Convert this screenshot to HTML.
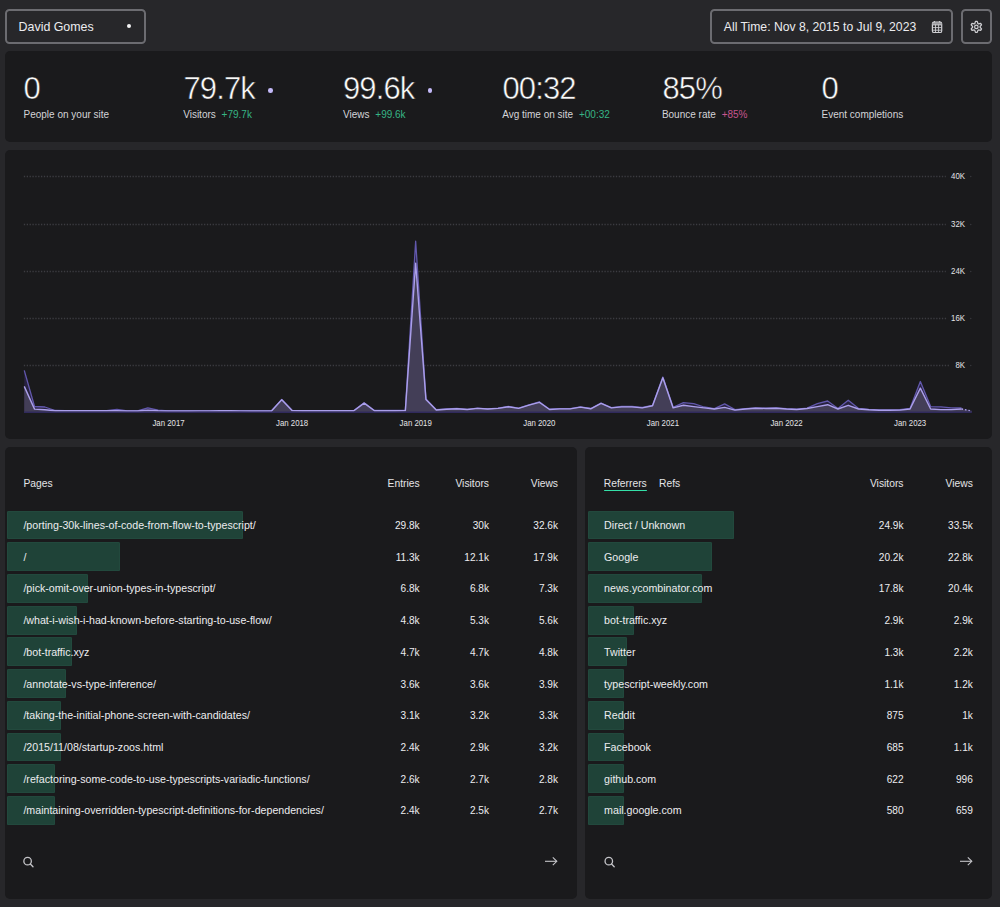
<!DOCTYPE html>
<html>
<head>
<meta charset="utf-8">
<style>
html, body { margin:0; padding:0; }
body { width:1000px; height:907px; background:#27272a; position:relative; overflow:hidden;
  font-family:"Liberation Sans", sans-serif; color:#e4e4e7; }
.abs { position:absolute; }
.btn { position:absolute; box-sizing:border-box; border:2px solid #6c6c71; border-radius:4.5px; background:#27272a; }
.panel { position:absolute; background:#1a1a1c; border-radius:5px; }
.big { position:absolute; font-size:31px; line-height:1; color:#fafafa; white-space:nowrap; letter-spacing:-0.9px; -webkit-text-stroke:0.5px #1a1a1c; }
.lbl { position:absolute; font-size:10px; line-height:1; color:#d4d4d8; white-space:nowrap; }
.dg { color:#36b585; margin-left:5.8px; }
.dp { color:#c7558f; margin-left:5.8px; }
.sdot { position:absolute; width:4.6px; height:4.6px; border-radius:50%; background:#c3b9f8; }
.yl, .xl { font-family:"Liberation Sans", sans-serif; font-size:8.7px; fill:#e4e4e7; }
.bar { position:absolute; height:29px; background:#1f4338; border-radius:1.5px; box-shadow: inset 0 0 0 1px #22493d; }
.rt { position:absolute; height:29px; line-height:29px; font-size:10.65px; color:#ececef; white-space:nowrap; }
.rn { position:absolute; height:29px; line-height:29px; font-size:10.1px; color:#ececef; white-space:nowrap; text-align:right; }
.th { position:absolute; font-size:10.3px; line-height:1; color:#e4e4e7; white-space:nowrap; }
</style>
</head>
<body>
<!-- top bar -->
<div class="btn" style="left:5px;top:9.2px;width:140.5px;height:34.4px;"></div>
<div class="abs" style="left:18.6px;top:19px;font-size:12.4px;line-height:16px;color:#ececef;">David Gomes</div>
<div class="abs" style="left:126.65px;top:23.85px;width:4.5px;height:4.5px;border-radius:50%;background:#f4f4f5;"></div>

<div class="btn" style="left:710px;top:9.2px;width:243.2px;height:34.4px;"></div>
<div class="abs" style="left:723.8px;top:19px;font-size:12.2px;line-height:16px;color:#ececef;">All Time: Nov 8, 2015 to Jul 9, 2023</div>
<div class="btn" style="left:961px;top:9.2px;width:31.2px;height:34.4px;"></div>
<svg class="abs" style="left:920px;top:10px" width="80" height="30" viewBox="920 10 80 30">
  <g stroke="#cfcfd3" fill="none">
    <rect x="932.4" y="22.2" width="9.3" height="10.3" rx="1.6" stroke-width="1.2"/>
    <rect x="932.4" y="23.0" width="9.3" height="1.9" fill="#9a9a9e" stroke="none"/>
    <line x1="935.5" y1="24.5" x2="935.5" y2="32.4" stroke-width="0.9"/>
    <line x1="938.6" y1="24.5" x2="938.6" y2="32.4" stroke-width="0.9"/>
    <line x1="932.4" y1="24.9" x2="941.7" y2="24.9" stroke-width="0.9"/>
    <line x1="932.4" y1="27.6" x2="941.7" y2="27.6" stroke-width="0.9"/>
    <line x1="932.4" y1="30.2" x2="941.7" y2="30.2" stroke-width="0.9"/>
    <line x1="934.4" y1="20.9" x2="934.4" y2="22.6" stroke-width="1.1"/>
    <line x1="939.6" y1="20.9" x2="939.6" y2="22.6" stroke-width="1.1"/>
    <path d="M975.48,21.42 L977.22,21.42 L977.88,23.47 L978.55,23.87 L980.66,23.41 L981.53,24.91 L980.08,26.51 L980.08,27.29 L981.53,28.89 L980.66,30.39 L978.55,29.93 L977.88,30.33 L977.22,32.38 L975.48,32.38 L974.82,30.33 L974.15,29.93 L972.04,30.39 L971.17,28.89 L972.62,27.29 L972.62,26.51 L971.17,24.91 L972.04,23.41 L974.15,23.87 L974.82,23.47 Z" stroke-width="1.25" stroke-linejoin="round"/>
    <circle cx="976.35" cy="26.9" r="1.75" stroke-width="1.2"/>
  </g>
</svg>

<!-- stats panel -->
<div class="panel" style="left:5px;top:51.3px;width:987px;height:90.3px;"></div>
<div class="big" style="left:23.5px;top:72.6px;">0</div>
<div class="lbl" style="left:23.5px;top:110.1px;">People on your site</div>

<div class="big" style="left:183.5px;top:72.6px;">79.7k</div>
<div class="sdot" style="left:268.3px;top:87.95px;"></div>
<div class="lbl" style="left:183.2px;top:110.1px;">Visitors<span class="dg">+79.7k</span></div>

<div class="big" style="left:343px;top:72.6px;">99.6k</div>
<div class="sdot" style="left:427.9px;top:87.95px;"></div>
<div class="lbl" style="left:343px;top:110.1px;">Views<span class="dg">+99.6k</span></div>

<div class="big" style="left:502.5px;top:72.6px;">00:32</div>
<div class="lbl" style="left:502.2px;top:110.1px;">Avg time on site<span class="dg">+00:32</span></div>

<div class="big" style="left:662.5px;top:72.6px;">85%</div>
<div class="lbl" style="left:661.9px;top:110.1px;">Bounce rate<span class="dp">+85%</span></div>

<div class="big" style="left:821.5px;top:72.6px;">0</div>
<div class="lbl" style="left:821.5px;top:110.1px;">Event completions</div>

<!-- chart panel -->
<div class="panel" style="left:5px;top:150px;width:987px;height:289.2px;"></div>
<svg class="abs" style="left:0;top:0" width="1000" height="907" viewBox="0 0 1000 907">
<line x1="23.85" y1="176.5" x2="945.8" y2="176.5" stroke="#3c3c41" stroke-width="1.3" stroke-dasharray="1.3 1.56"/>
<text transform="translate(965,179.1) scale(0.9,1)" text-anchor="end" class="yl">40K</text>
<circle cx="970.8" cy="176.5" r="0.65" fill="#3c3c41"/>
<line x1="23.85" y1="224.5" x2="945.8" y2="224.5" stroke="#3c3c41" stroke-width="1.3" stroke-dasharray="1.3 1.56"/>
<text transform="translate(965,227.1) scale(0.9,1)" text-anchor="end" class="yl">32K</text>
<circle cx="970.8" cy="224.5" r="0.65" fill="#3c3c41"/>
<line x1="23.85" y1="271.5" x2="945.8" y2="271.5" stroke="#3c3c41" stroke-width="1.3" stroke-dasharray="1.3 1.56"/>
<text transform="translate(965,274.1) scale(0.9,1)" text-anchor="end" class="yl">24K</text>
<circle cx="970.8" cy="271.5" r="0.65" fill="#3c3c41"/>
<line x1="23.85" y1="318.5" x2="946.3" y2="318.5" stroke="#3c3c41" stroke-width="1.3" stroke-dasharray="1.3 1.56"/>
<text transform="translate(965,321.1) scale(0.9,1)" text-anchor="end" class="yl">16K</text>
<circle cx="970.8" cy="318.5" r="0.65" fill="#3c3c41"/>
<line x1="23.85" y1="365.5" x2="950.2" y2="365.5" stroke="#3c3c41" stroke-width="1.3" stroke-dasharray="1.3 1.56"/>
<text transform="translate(965,368.1) scale(0.9,1)" text-anchor="end" class="yl">8K</text>
<circle cx="970.8" cy="365.5" r="0.65" fill="#3c3c41"/>
<path d="M24.25,412.0 L24.25,370.40 34.55,406.50 44.85,407.00 55.15,410.50 65.45,410.60 75.75,410.60 86.05,410.60 96.35,410.60 106.65,410.60 116.95,409.40 127.25,410.80 137.55,410.80 147.85,407.80 158.15,410.20 168.45,410.90 178.75,410.90 189.05,410.90 199.35,410.80 209.65,410.80 219.95,410.70 230.25,410.70 240.55,410.80 250.85,410.90 261.15,410.90 271.45,410.90 281.75,399.40 292.05,410.30 302.35,410.60 312.65,410.60 322.95,410.60 333.25,410.60 343.55,410.60 353.85,410.60 364.15,402.80 374.45,410.50 384.75,410.50 395.05,410.50 405.35,410.40 415.65,241.20 425.95,399.00 436.25,409.70 446.55,409.00 456.85,408.50 467.15,409.30 477.45,408.20 487.75,408.80 498.05,408.20 508.35,406.50 518.65,408.10 528.95,404.80 539.25,401.80 549.55,409.20 559.85,408.60 570.15,408.60 580.45,406.80 590.75,408.50 601.05,403.00 611.35,407.60 621.65,406.50 631.95,406.50 642.25,407.50 652.55,405.30 662.85,377.00 673.15,407.30 683.45,402.60 693.75,403.70 704.05,407.00 714.35,408.60 724.65,403.90 734.95,409.60 745.25,408.60 755.55,407.80 765.85,408.10 776.15,407.80 786.45,408.60 796.75,409.10 807.05,408.10 817.35,403.70 827.65,401.00 837.95,408.50 848.25,400.20 858.55,408.50 868.85,409.40 879.15,409.90 889.45,409.90 899.75,409.70 910.05,408.50 920.35,381.50 930.65,406.60 940.95,406.80 951.25,407.90 961.55,407.90 971.85,410.50 L971.85,412.0 Z" fill="#28223f" />
<path d="M24.25,412.0 L24.25,386.40 34.55,409.10 44.85,409.70 55.15,410.70 65.45,410.80 75.75,410.80 86.05,410.80 96.35,410.80 106.65,410.80 116.95,410.70 127.25,411.00 137.55,411.00 147.85,410.20 158.15,410.80 168.45,411.00 178.75,411.00 189.05,411.00 199.35,410.90 209.65,410.90 219.95,410.80 230.25,410.80 240.55,410.90 250.85,411.00 261.15,411.00 271.45,411.00 281.75,399.80 292.05,410.50 302.35,410.80 312.65,410.80 322.95,410.80 333.25,410.80 343.55,410.80 353.85,410.80 364.15,403.10 374.45,410.70 384.75,410.70 395.05,410.70 405.35,410.60 415.65,263.20 425.95,399.60 436.25,410.00 446.55,409.20 456.85,408.70 467.15,409.50 477.45,408.40 487.75,409.00 498.05,408.40 508.35,406.80 518.65,408.40 528.95,405.20 539.25,402.30 549.55,409.50 559.85,408.90 570.15,408.90 580.45,407.10 590.75,408.80 601.05,403.40 611.35,407.90 621.65,406.90 631.95,406.90 642.25,407.90 652.55,405.80 662.85,377.80 673.15,407.90 683.45,405.30 693.75,406.60 704.05,407.90 714.35,409.00 724.65,407.40 734.95,410.10 745.25,409.00 755.55,408.20 765.85,408.50 776.15,408.20 786.45,409.00 796.75,409.50 807.05,408.50 817.35,406.60 827.65,404.70 837.95,409.00 848.25,405.30 858.55,409.00 868.85,409.80 879.15,410.30 889.45,410.30 899.75,410.10 910.05,409.00 920.35,388.10 930.65,409.00 940.95,409.60 951.25,409.60 961.55,409.00 971.85,411.00 L971.85,412.0 Z" fill="#433e57" />
<polyline points="24.25,370.40 34.55,406.50 44.85,407.00 55.15,410.50 65.45,410.60 75.75,410.60 86.05,410.60 96.35,410.60 106.65,410.60 116.95,409.40 127.25,410.80 137.55,410.80 147.85,407.80 158.15,410.20 168.45,410.90 178.75,410.90 189.05,410.90 199.35,410.80 209.65,410.80 219.95,410.70 230.25,410.70 240.55,410.80 250.85,410.90 261.15,410.90 271.45,410.90 281.75,399.40 292.05,410.30 302.35,410.60 312.65,410.60 322.95,410.60 333.25,410.60 343.55,410.60 353.85,410.60 364.15,402.80 374.45,410.50 384.75,410.50 395.05,410.50 405.35,410.40 415.65,241.20 425.95,399.00 436.25,409.70 446.55,409.00 456.85,408.50 467.15,409.30 477.45,408.20 487.75,408.80 498.05,408.20 508.35,406.50 518.65,408.10 528.95,404.80 539.25,401.80 549.55,409.20 559.85,408.60 570.15,408.60 580.45,406.80 590.75,408.50 601.05,403.00 611.35,407.60 621.65,406.50 631.95,406.50 642.25,407.50 652.55,405.30 662.85,377.00 673.15,407.30 683.45,402.60 693.75,403.70 704.05,407.00 714.35,408.60 724.65,403.90 734.95,409.60 745.25,408.60 755.55,407.80 765.85,408.10 776.15,407.80 786.45,408.60 796.75,409.10 807.05,408.10 817.35,403.70 827.65,401.00 837.95,408.50 848.25,400.20 858.55,408.50 868.85,409.40 879.15,409.90 889.45,409.90 899.75,409.70 910.05,408.50 920.35,381.50 930.65,406.60 940.95,406.80 951.25,407.90 961.55,407.90" fill="none" stroke="#6258ad" stroke-width="1.3" stroke-linejoin="round"/>
<polyline points="24.25,386.40 34.55,409.10 44.85,409.70 55.15,410.70 65.45,410.80 75.75,410.80 86.05,410.80 96.35,410.80 106.65,410.80 116.95,410.70 127.25,411.00 137.55,411.00 147.85,410.20 158.15,410.80 168.45,411.00 178.75,411.00 189.05,411.00 199.35,410.90 209.65,410.90 219.95,410.80 230.25,410.80 240.55,410.90 250.85,411.00 261.15,411.00 271.45,411.00 281.75,399.80 292.05,410.50 302.35,410.80 312.65,410.80 322.95,410.80 333.25,410.80 343.55,410.80 353.85,410.80 364.15,403.10 374.45,410.70 384.75,410.70 395.05,410.70 405.35,410.60 415.65,263.20 425.95,399.60 436.25,410.00 446.55,409.20 456.85,408.70 467.15,409.50 477.45,408.40 487.75,409.00 498.05,408.40 508.35,406.80 518.65,408.40 528.95,405.20 539.25,402.30 549.55,409.50 559.85,408.90 570.15,408.90 580.45,407.10 590.75,408.80 601.05,403.40 611.35,407.90 621.65,406.90 631.95,406.90 642.25,407.90 652.55,405.80 662.85,377.80 673.15,407.90 683.45,405.30 693.75,406.60 704.05,407.90 714.35,409.00 724.65,407.40 734.95,410.10 745.25,409.00 755.55,408.20 765.85,408.50 776.15,408.20 786.45,409.00 796.75,409.50 807.05,408.50 817.35,406.60 827.65,404.70 837.95,409.00 848.25,405.30 858.55,409.00 868.85,409.80 879.15,410.30 889.45,410.30 899.75,410.10 910.05,409.00 920.35,388.10 930.65,409.00 940.95,409.60 951.25,409.60 961.55,409.00" fill="none" stroke="#ab9fea" stroke-width="1.4" stroke-linejoin="round"/>
<line x1="961.55" y1="409.0" x2="971.85" y2="411.0" stroke="#ab9fea" stroke-width="1.4" stroke-dasharray="1.5 2"/>
<line x1="24" y1="412.3" x2="971.85" y2="412.3" stroke="#302a5c" stroke-width="1.4"/>
<text transform="translate(168.50,425.9) scale(0.9,1)" text-anchor="middle" class="xl">Jan 2017</text>
<text transform="translate(292.10,425.9) scale(0.9,1)" text-anchor="middle" class="xl">Jan 2018</text>
<text transform="translate(415.70,425.9) scale(0.9,1)" text-anchor="middle" class="xl">Jan 2019</text>
<text transform="translate(539.30,425.9) scale(0.9,1)" text-anchor="middle" class="xl">Jan 2020</text>
<text transform="translate(662.90,425.9) scale(0.9,1)" text-anchor="middle" class="xl">Jan 2021</text>
<text transform="translate(786.50,425.9) scale(0.9,1)" text-anchor="middle" class="xl">Jan 2022</text>
<text transform="translate(910.10,425.9) scale(0.9,1)" text-anchor="middle" class="xl">Jan 2023</text>
</svg>

<!-- bottom panels -->
<div class="panel" style="left:5.2px;top:447px;width:572px;height:452.3px;"></div>
<div class="panel" style="left:584.5px;top:447px;width:407.5px;height:452.3px;"></div>

<div class="th" style="left:23.4px;top:479.2px;">Pages</div>
<div class="th" style="right:580.4px;top:479.2px;">Entries</div>
<div class="th" style="right:511px;top:479.2px;">Visitors</div>
<div class="th" style="right:442px;top:479.2px;">Views</div>

<div class="th" style="left:603.8px;top:479.2px;">Referrers</div>
<div class="abs" style="left:603.8px;top:489.6px;width:42.8px;height:1.8px;background:#34e0a8;border-radius:1px;"></div>
<div class="th" style="left:659px;top:479.2px;">Refs</div>
<div class="th" style="right:96.5px;top:479.2px;">Visitors</div>
<div class="th" style="right:27.2px;top:479.2px;">Views</div>

<div class="bar" style="left:7.2px;top:510.50px;width:235.80px;height:28.9px"></div>
<div class="rt" style="left:23.4px;top:510.95px">/porting-30k-lines-of-code-from-flow-to-typescript/</div>
<div class="rn" style="right:580.4px;top:510.95px">29.8k</div>
<div class="rn" style="right:511.0px;top:510.95px">30k</div>
<div class="rn" style="right:442.0px;top:510.95px">32.6k</div>
<div class="bar" style="left:7.2px;top:542.22px;width:112.60px;height:28.9px"></div>
<div class="rt" style="left:23.4px;top:542.67px">/</div>
<div class="rn" style="right:580.4px;top:542.67px">11.3k</div>
<div class="rn" style="right:511.0px;top:542.67px">12.1k</div>
<div class="rn" style="right:442.0px;top:542.67px">17.9k</div>
<div class="bar" style="left:7.2px;top:573.94px;width:80.60px;height:28.9px"></div>
<div class="rt" style="left:23.4px;top:574.39px">/pick-omit-over-union-types-in-typescript/</div>
<div class="rn" style="right:580.4px;top:574.39px">6.8k</div>
<div class="rn" style="right:511.0px;top:574.39px">6.8k</div>
<div class="rn" style="right:442.0px;top:574.39px">7.3k</div>
<div class="bar" style="left:7.2px;top:605.66px;width:69.60px;height:28.9px"></div>
<div class="rt" style="left:23.4px;top:606.11px">/what-i-wish-i-had-known-before-starting-to-use-flow/</div>
<div class="rn" style="right:580.4px;top:606.11px">4.8k</div>
<div class="rn" style="right:511.0px;top:606.11px">5.3k</div>
<div class="rn" style="right:442.0px;top:606.11px">5.6k</div>
<div class="bar" style="left:7.2px;top:637.38px;width:64.50px;height:28.9px"></div>
<div class="rt" style="left:23.4px;top:637.83px">/bot-traffic.xyz</div>
<div class="rn" style="right:580.4px;top:637.83px">4.7k</div>
<div class="rn" style="right:511.0px;top:637.83px">4.7k</div>
<div class="rn" style="right:442.0px;top:637.83px">4.8k</div>
<div class="bar" style="left:7.2px;top:669.10px;width:58.90px;height:28.9px"></div>
<div class="rt" style="left:23.4px;top:669.55px">/annotate-vs-type-inference/</div>
<div class="rn" style="right:580.4px;top:669.55px">3.6k</div>
<div class="rn" style="right:511.0px;top:669.55px">3.6k</div>
<div class="rn" style="right:442.0px;top:669.55px">3.9k</div>
<div class="bar" style="left:7.2px;top:700.82px;width:53.60px;height:28.9px"></div>
<div class="rt" style="left:23.4px;top:701.27px">/taking-the-initial-phone-screen-with-candidates/</div>
<div class="rn" style="right:580.4px;top:701.27px">3.1k</div>
<div class="rn" style="right:511.0px;top:701.27px">3.2k</div>
<div class="rn" style="right:442.0px;top:701.27px">3.3k</div>
<div class="bar" style="left:7.2px;top:732.54px;width:53.60px;height:28.9px"></div>
<div class="rt" style="left:23.4px;top:732.99px">/2015/11/08/startup-zoos.html</div>
<div class="rn" style="right:580.4px;top:732.99px">2.4k</div>
<div class="rn" style="right:511.0px;top:732.99px">2.9k</div>
<div class="rn" style="right:442.0px;top:732.99px">3.2k</div>
<div class="bar" style="left:7.2px;top:764.26px;width:48.00px;height:28.9px"></div>
<div class="rt" style="left:23.4px;top:764.71px">/refactoring-some-code-to-use-typescripts-variadic-functions/</div>
<div class="rn" style="right:580.4px;top:764.71px">2.6k</div>
<div class="rn" style="right:511.0px;top:764.71px">2.7k</div>
<div class="rn" style="right:442.0px;top:764.71px">2.8k</div>
<div class="bar" style="left:7.2px;top:795.98px;width:48.00px;height:28.9px"></div>
<div class="rt" style="left:23.4px;top:796.43px">/maintaining-overridden-typescript-definitions-for-dependencies/</div>
<div class="rn" style="right:580.4px;top:796.43px">2.4k</div>
<div class="rn" style="right:511.0px;top:796.43px">2.5k</div>
<div class="rn" style="right:442.0px;top:796.43px">2.7k</div>
<div class="bar" style="left:587.7px;top:510.50px;width:146.30px;height:28.9px"></div>
<div class="rt" style="left:604.1px;top:510.95px">Direct / Unknown</div>
<div class="rn" style="right:96.5px;top:510.95px">24.9k</div>
<div class="rn" style="right:27.2px;top:510.95px">33.5k</div>
<div class="bar" style="left:587.7px;top:542.22px;width:124.50px;height:28.9px"></div>
<div class="rt" style="left:604.1px;top:542.67px">Google</div>
<div class="rn" style="right:96.5px;top:542.67px">20.2k</div>
<div class="rn" style="right:27.2px;top:542.67px">22.8k</div>
<div class="bar" style="left:587.7px;top:573.94px;width:114.00px;height:28.9px"></div>
<div class="rt" style="left:604.1px;top:574.39px">news.ycombinator.com</div>
<div class="rn" style="right:96.5px;top:574.39px">17.8k</div>
<div class="rn" style="right:27.2px;top:574.39px">20.4k</div>
<div class="bar" style="left:587.7px;top:605.66px;width:46.60px;height:28.9px"></div>
<div class="rt" style="left:604.1px;top:606.11px">bot-traffic.xyz</div>
<div class="rn" style="right:96.5px;top:606.11px">2.9k</div>
<div class="rn" style="right:27.2px;top:606.11px">2.9k</div>
<div class="bar" style="left:587.7px;top:637.38px;width:39.30px;height:28.9px"></div>
<div class="rt" style="left:604.1px;top:637.83px">Twitter</div>
<div class="rn" style="right:96.5px;top:637.83px">1.3k</div>
<div class="rn" style="right:27.2px;top:637.83px">2.2k</div>
<div class="bar" style="left:587.7px;top:669.10px;width:36.10px;height:28.9px"></div>
<div class="rt" style="left:604.1px;top:669.55px">typescript-weekly.com</div>
<div class="rn" style="right:96.5px;top:669.55px">1.1k</div>
<div class="rn" style="right:27.2px;top:669.55px">1.2k</div>
<div class="bar" style="left:587.7px;top:700.82px;width:36.10px;height:28.9px"></div>
<div class="rt" style="left:604.1px;top:701.27px">Reddit</div>
<div class="rn" style="right:96.5px;top:701.27px">875</div>
<div class="rn" style="right:27.2px;top:701.27px">1k</div>
<div class="bar" style="left:587.7px;top:732.54px;width:36.10px;height:28.9px"></div>
<div class="rt" style="left:604.1px;top:732.99px">Facebook</div>
<div class="rn" style="right:96.5px;top:732.99px">685</div>
<div class="rn" style="right:27.2px;top:732.99px">1.1k</div>
<div class="bar" style="left:587.7px;top:764.26px;width:36.10px;height:28.9px"></div>
<div class="rt" style="left:604.1px;top:764.71px">github.com</div>
<div class="rn" style="right:96.5px;top:764.71px">622</div>
<div class="rn" style="right:27.2px;top:764.71px">996</div>
<div class="bar" style="left:587.7px;top:795.98px;width:36.10px;height:28.9px"></div>
<div class="rt" style="left:604.1px;top:796.43px">mail.google.com</div>
<div class="rn" style="right:96.5px;top:796.43px">580</div>
<div class="rn" style="right:27.2px;top:796.43px">659</div>

<!-- footers -->
<svg class="abs" style="left:0;top:840px" width="1000" height="40" viewBox="0 840 1000 40">
  <circle cx="27.6" cy="861.2" r="3.75" fill="none" stroke="#c4c4c8" stroke-width="1.3"/>
  <line x1="30.35" y1="863.95" x2="33.00" y2="866.80" stroke="#c4c4c8" stroke-width="1.3" stroke-linecap="round"/>
</svg>
<svg class="abs" style="left:0;top:840px" width="1000" height="40" viewBox="0 840 1000 40">
  <line x1="545" y1="861.3" x2="556.5" y2="861.3" stroke="#c4c4c8" stroke-width="1.1"/>
  <path d="M552.80 857.45 L556.80 861.30 L552.80 865.15" fill="none" stroke="#c4c4c8" stroke-width="1.1" stroke-linejoin="miter"/>
</svg>
<svg class="abs" style="left:0;top:840px" width="1000" height="40" viewBox="0 840 1000 40">
  <circle cx="608.8" cy="861.2" r="3.75" fill="none" stroke="#c4c4c8" stroke-width="1.3"/>
  <line x1="611.55" y1="863.95" x2="614.20" y2="866.80" stroke="#c4c4c8" stroke-width="1.3" stroke-linecap="round"/>
</svg>
<svg class="abs" style="left:0;top:840px" width="1000" height="40" viewBox="0 840 1000 40">
  <line x1="960" y1="861.3" x2="971.5" y2="861.3" stroke="#c4c4c8" stroke-width="1.1"/>
  <path d="M967.80 857.45 L971.80 861.30 L967.80 865.15" fill="none" stroke="#c4c4c8" stroke-width="1.1" stroke-linejoin="miter"/>
</svg>
</body>
</html>
